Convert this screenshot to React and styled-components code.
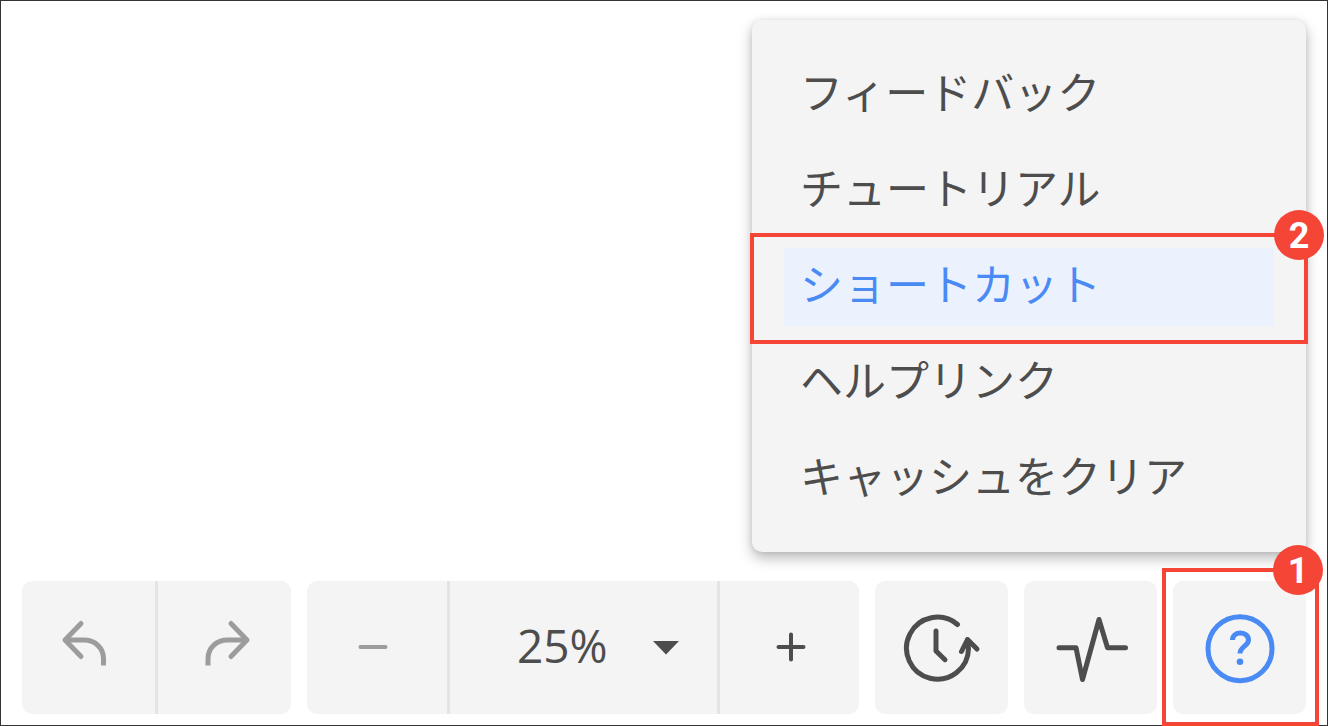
import styled, { createGlobalStyle } from "styled-components";

const colors = {
  panel: "#f4f4f4",
  divider: "#e4e4e4",
  text: "#4d4d4d",
  muted: "#9c9c9c",
  blue: "#4a8af4",
  highlight: "#ebf2fe",
  red: "#f54537"
};

const GlobalStyle = createGlobalStyle`
  * {
    box-sizing: border-box;
  }
  body {
    background: #ffffff;
    color: ${colors.text};
    font-family: "Open Sans", "Noto Sans CJK JP", sans-serif;
    margin: 0;
  }
  button,
  select {
    background: none;
    border: 0;
    border-radius: 0;
    color: inherit;
    cursor: pointer;
    font: inherit;
    margin: 0;
    padding: 0;
  }
`;

const Frame = styled.main`
  border: 1px solid #333333;
  display: flex;
  flex-direction: column;
  gap: 29px;
  justify-content: space-between;
  min-height: 100vh;
  padding: 19px 21px 11px;
`;

const Menu = styled.ul`
  align-self: flex-end;
  background: ${colors.panel};
  border-radius: 10px;
  box-shadow: 0 6px 14px rgba(0, 0, 0, 0.28), 0 0 6px rgba(0, 0, 0, 0.08);
  display: flex;
  flex-direction: column;
  gap: 18px;
  list-style: none;
  margin: 0;
  max-width: 100%;
  padding: 36px 32px 34px;
  width: 554px;
`;

const MenuItem = styled.li`
  position: relative;
`;

const MenuButton = styled.button`
  background: ${props => (props.$active ? colors.highlight : "transparent")};
  color: ${props => (props.$active ? colors.blue : colors.text)};
  display: block;
  font-family: "Noto Sans CJK JP", sans-serif;
  font-size: 43px;
  font-weight: 400;
  line-height: 68px;
  padding: 0 16px 10px;
  text-align: left;
  white-space: nowrap;
  width: 100%;
`;

const Toolbar = styled.div`
  display: flex;
  gap: 16px;
`;

const Group = styled.div`
  background: ${colors.panel};
  border-radius: 10px;
  display: flex;
  flex: ${props => (props.$grow ? "1 1 auto" : "0 0 auto")};
  height: 133px;
  position: relative;
  > button + button,
  > button + label,
  > label + button {
    border-left: 3px solid ${colors.divider};
  }
`;

const ToolButton = styled.button`
  align-items: center;
  color: ${props => props.$color || colors.text};
  display: flex;
  justify-content: center;
  width: ${props => props.$width || 133}px;
  &:disabled {
    cursor: default;
  }
`;

const ZoomField = styled.label`
  align-items: center;
  display: grid;
  flex: 1;
  grid-template-columns: 1fr 37px;
  svg {
    grid-column: 2;
    grid-row: 1;
    justify-self: start;
    margin-left: -27px;
    pointer-events: none;
  }
`;

const ZoomSelect = styled.select`
  appearance: none;
  font-size: 46px;
  grid-column: 1 / -1;
  grid-row: 1;
  height: 100%;
  padding: 0 0 6px 67px;
  width: 100%;
`;

const Icon = styled.svg`
  display: block;
  fill: none;
  flex: none;
  stroke: currentColor;
  stroke-linecap: round;
  stroke-linejoin: round;
  stroke-width: 5px;
`;

const Outline = styled.div`
  border: 4px solid ${colors.red};
  inset: ${props => props.$inset};
  pointer-events: none;
  position: absolute;
`;

const Badge = styled.span`
  background: ${colors.red};
  border-radius: 50%;
  color: #ffffff;
  font-family: Roboto, sans-serif;
  font-size: 36px;
  font-weight: 700;
  height: 50px;
  line-height: 52px;
  position: absolute;
  right: ${props => props.$right}px;
  text-align: center;
  top: -27px;
  width: 50px;
`;

const Callout = ({ step, inset, badgeRight }) => (
  <Outline $inset={inset}>
    <Badge $right={badgeRight}>{step}</Badge>
  </Outline>
);

const UndoIcon = () => (
  <Icon width="64" height="64" viewBox="0 0 64 64">
    <path d="M24 7.500 8 24l16 16.500" />
    <path d="M8.500 24H27c11 0 19.500 8 19.500 18.500v7" strokeLinecap="butt" />
  </Icon>
);

const RedoIcon = () => (
  <Icon width="64" height="64" viewBox="0 0 64 64">
    <path d="M38 7.500 54 24l-16 16.500" />
    <path d="M53.500 24H34.500C23.500 24 15 32 15 42.500v7" strokeLinecap="butt" />
  </Icon>
);

const MinusIcon = () => (
  <Icon width="64" height="64" viewBox="0 0 64 64">
    <path d="M15.500 31h25" strokeWidth="4" />
  </Icon>
);

const PlusIcon = () => (
  <Icon width="64" height="64" viewBox="0 0 64 64">
    <path d="M20.500 31h25M33 18.500v25" strokeWidth="4" />
  </Icon>
);

const CaretIcon = () => (
  <svg width="26" height="14" viewBox="0 0 26 14">
    <path d="M0 0h26L13 13.500z" fill="currentColor" />
  </svg>
);

const HistoryIcon = () => (
  <Icon width="80" height="80" viewBox="0 0 80 80">
    <path d="M55.500 16.500A31 31 0 1 0 66.500 40.700L65.500 32" />
    <path d="M59.500 43.500 65.500 31.500l9.500 9.500" />
    <path d="M34 23v20l9 8.700" />
  </Icon>
);

const PulseIcon = () => (
  <Icon width="80" height="80" viewBox="0 0 80 80">
    <path d="M8 39.700h17L31.500 71.500 48 11.500l8.500 28.200h18" />
  </Icon>
);

const HelpIcon = () => (
  <Icon width="80" height="80" viewBox="0 0 80 80">
    <circle cx="40" cy="40.700" r="32" />
    <path
      d="M32.500 32c0-4.500 3.500-7 8-7s8 3 8 7c0 6-8.500 6.500-8.500 13.500"
      strokeLinecap="butt"
    />
    <circle cx="40" cy="53.700" r="3.300" fill="currentColor" stroke="none" />
  </Icon>
);

const menuItems = [
  { label: "フィードバック" },
  { label: "チュートリアル" },
  { label: "ショートカット", active: true },
  { label: "ヘルプリンク" },
  { label: "キャッシュをクリア" }
];

const App = () => (
  <>
    <GlobalStyle />
    <Frame>
      <Menu>
        {menuItems.map(({ label, active }) => (
          <MenuItem key={label}>
            <MenuButton type="button" $active={active}>
              {label}
            </MenuButton>
            {active && (
              <Callout step="2" inset="-15px -34px -18px" badgeRight={-20} />
            )}
          </MenuItem>
        ))}
      </Menu>
      <Toolbar role="toolbar">
        <Group>
          <ToolButton
            type="button"
            aria-label="元に戻す"
            disabled
            $color={colors.muted}
          >
            <UndoIcon />
          </ToolButton>
          <ToolButton
            type="button"
            aria-label="やり直す"
            disabled
            $color={colors.muted}
            $width={136}
          >
            <RedoIcon />
          </ToolButton>
        </Group>
        <Group $grow>
          <ToolButton
            type="button"
            aria-label="縮小"
            $color={colors.muted}
            $width={140}
          >
            <MinusIcon />
          </ToolButton>
          <ZoomField>
            <ZoomSelect aria-label="ズーム" defaultValue="25">
              <option value="25">25%</option>
              <option value="50">50%</option>
              <option value="100">100%</option>
            </ZoomSelect>
            <CaretIcon />
          </ZoomField>
          <ToolButton type="button" aria-label="拡大" $width={142}>
            <PlusIcon />
          </ToolButton>
        </Group>
        <Group>
          <ToolButton type="button" aria-label="履歴">
            <HistoryIcon />
          </ToolButton>
        </Group>
        <Group>
          <ToolButton type="button" aria-label="アクティビティ">
            <PulseIcon />
          </ToolButton>
        </Group>
        <Group>
          <ToolButton type="button" aria-label="ヘルプ" $color={colors.blue}>
            <HelpIcon />
          </ToolButton>
          <Callout step="1" inset="-13px -13px -12px -11px" badgeRight={-8} />
        </Group>
      </Toolbar>
    </Frame>
  </>
);

export default App;
